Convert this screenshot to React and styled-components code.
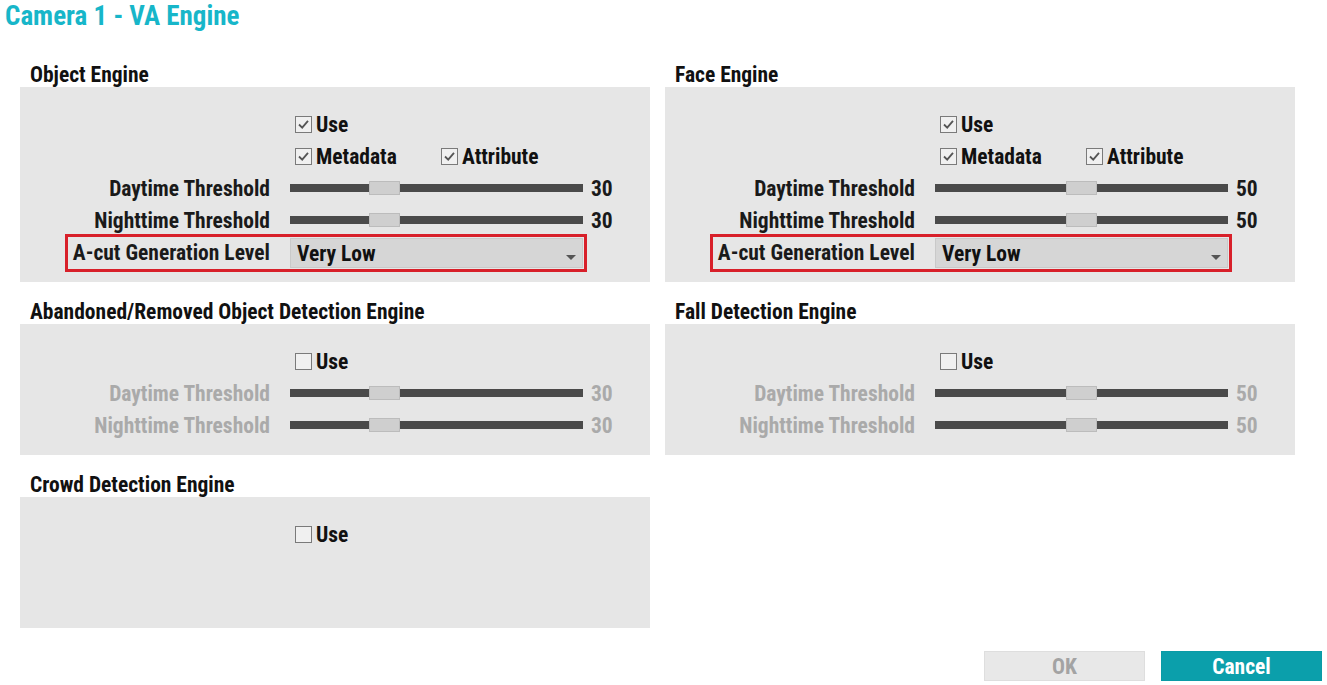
import React from 'react'
import styled, { createGlobalStyle } from 'styled-components'

const GlobalStyle = createGlobalStyle`
  html, body {
    margin: 0;
    padding: 0;
    background: #ffffff;
  }
  body {
    font-family: "Roboto Condensed", "DejaVu Sans Condensed", "Liberation Sans Narrow", "Liberation Sans", sans-serif;
    font-stretch: condensed;
  }
`

const engines = [
  {
    title: 'Object Engine',
    use: true,
    options: true,
    day: 30,
    night: 30,
    level: 'Very Low',
  },
  {
    title: 'Face Engine',
    use: true,
    options: true,
    day: 50,
    night: 50,
    level: 'Very Low',
  },
  {
    title: 'Abandoned/Removed Object Detection Engine',
    use: false,
    day: 30,
    night: 30,
  },
  {
    title: 'Fall Detection Engine',
    use: false,
    day: 50,
    night: 50,
  },
  {
    title: 'Crowd Detection Engine',
    use: false,
    tall: true,
  },
]

const Check = ({ checked, children }) => (
  <CheckItem>
    <Box>
      {checked && (
        <svg width="13" height="13" viewBox="0 0 13 13">
          <path d="M2 6.5 L5.2 9.6 L11 2.8" fill="none" stroke="#555" strokeWidth="1.8" />
        </svg>
      )}
    </Box>
    <CheckText>{children}</CheckText>
  </CheckItem>
)

const Slider = ({ label, value, disabled }) => (
  <Row>
    <Label $disabled={disabled}>{label}</Label>
    <Track>
      <Thumb style={{ left: `${(value / 100) * 262}px` }} />
    </Track>
    <Value $disabled={disabled}>{value}</Value>
  </Row>
)

const Engine = ({ engine }) => {
  const off = !engine.use
  return (
    <Section>
      <SectionTitle>{engine.title}</SectionTitle>
      <Panel $tall={engine.tall}>
        <Row>
          <Label />
          <Checks>
            <Check checked={engine.use}>Use</Check>
          </Checks>
        </Row>
        {engine.options && (
          <Row>
            <Label />
            <Checks>
              <Check checked>Metadata</Check>
              <Check checked>Attribute</Check>
            </Checks>
          </Row>
        )}
        {engine.day !== undefined && (
          <>
            <Slider label="Daytime Threshold" value={engine.day} disabled={off} />
            <Slider label="Nighttime Threshold" value={engine.night} disabled={off} />
          </>
        )}
        {engine.level && (
          <Row $highlight>
            <Label>A-cut Generation Level</Label>
            <Select>
              <span>{engine.level}</span>
              <Caret />
            </Select>
          </Row>
        )}
      </Panel>
    </Section>
  )
}

const App = () => {
  return (
    <Page>
      <GlobalStyle />
      <Title>Camera 1 - VA Engine</Title>
      <Grid>
        {engines.map((e) => (
          <Engine key={e.title} engine={e} />
        ))}
      </Grid>
      <Footer>
        <Button disabled>OK</Button>
        <Button $primary>Cancel</Button>
      </Footer>
    </Page>
  )
}

export default App

const Page = styled.div`
  height: 685px;
  box-sizing: border-box;
  display: flex;
  flex-direction: column;
  padding: 0 5px 4px 0;
`

const Title = styled.h1`
  margin: 0;
  padding: 1px 0 0 5px;
  font-size: 27px;
  line-height: 30px;
  font-weight: 700;
  color: #17b6c9;
`

const Grid = styled.div`
  display: grid;
  grid-template-columns: 630px 630px;
  column-gap: 15px;
  row-gap: 17px;
  margin: 31px 0 0 20px;
  align-items: start;
`

const Section = styled.div`
  display: flex;
  flex-direction: column;
`

const SectionTitle = styled.div`
  font-size: 21.5px;
  line-height: 24px;
  font-weight: 700;
  color: #111;
  padding: 1px 0 0 10px;
`

const Panel = styled.div`
  background: #e6e6e6;
  padding: 21px 0 14px;
  min-height: ${(p) => (p.$tall ? '96px' : '0')};
  display: flex;
  flex-direction: column;
`

const Row = styled.div`
  position: relative;
  display: flex;
  align-items: center;
  height: 32px;
  gap: 20px;

  ${(p) =>
    p.$highlight &&
    `
    &::after {
      content: '';
      position: absolute;
      left: 45px;
      width: 516px;
      top: -2px;
      bottom: -4px;
      border: 3px solid #d8202a;
      pointer-events: none;
    }
  `}
`

const Label = styled.div`
  width: 250px;
  flex-shrink: 0;
  text-align: right;
  font-size: 21.5px;
  font-weight: 700;
  color: ${(p) => (p.$disabled ? '#aaaaaa' : '#1a1a1a')};
  white-space: nowrap;
`

const Checks = styled.div`
  display: flex;
  padding-left: 5px;
`

const CheckItem = styled.label`
  display: flex;
  align-items: center;
  gap: 4px;
  width: 146px;
`

const Box = styled.span`
  width: 15px;
  height: 15px;
  border: 1px solid #7a7a7a;
  background: #f0f0f0;
  display: flex;
  align-items: center;
  justify-content: center;
`

const CheckText = styled.span`
  font-size: 21.5px;
  font-weight: 700;
  color: #111;
`

const Track = styled.div`
  position: relative;
  width: 293px;
  height: 8px;
  background: #4a4a4a;
`

const Thumb = styled.div`
  position: absolute;
  top: -3px;
  width: 29px;
  height: 12px;
  background: #cfcfcf;
  border: 1px solid #bcbcbc;
`

const Value = styled.div`
  margin-left: -12px;
  font-size: 21.5px;
  font-weight: 700;
  color: ${(p) => (p.$disabled ? '#aaaaaa' : '#1a1a1a')};
`

const Select = styled.div`
  box-sizing: border-box;
  width: 293px;
  height: 30px;
  margin-top: 2px;
  padding: 0 6px;
  display: flex;
  align-items: center;
  justify-content: space-between;
  background: #d6d6d6;
  border: 1px solid #c9c9c9;
  font-size: 21.5px;
  font-weight: 700;
  color: #111;
`

const Caret = styled.span`
  width: 0;
  height: 0;
  margin-top: 8px;
  border-left: 5px solid transparent;
  border-right: 5px solid transparent;
  border-top: 5px solid #555;
`

const Footer = styled.div`
  margin-top: auto;
  display: flex;
  justify-content: flex-end;
  gap: 16px;
`

const Button = styled.button`
  width: 161px;
  height: 30px;
  border: 1px solid ${(p) => (p.$primary ? '#0a9ba6' : '#dedede')};
  background: ${(p) => (p.$primary ? '#0b9fab' : '#e8e8e8')};
  color: ${(p) => (p.$primary ? '#ffffff' : '#a3a3a3')};
  font-family: inherit;
  font-stretch: condensed;
  font-size: 21.5px;
  font-weight: 700;
  padding: 0;
  cursor: pointer;
`
